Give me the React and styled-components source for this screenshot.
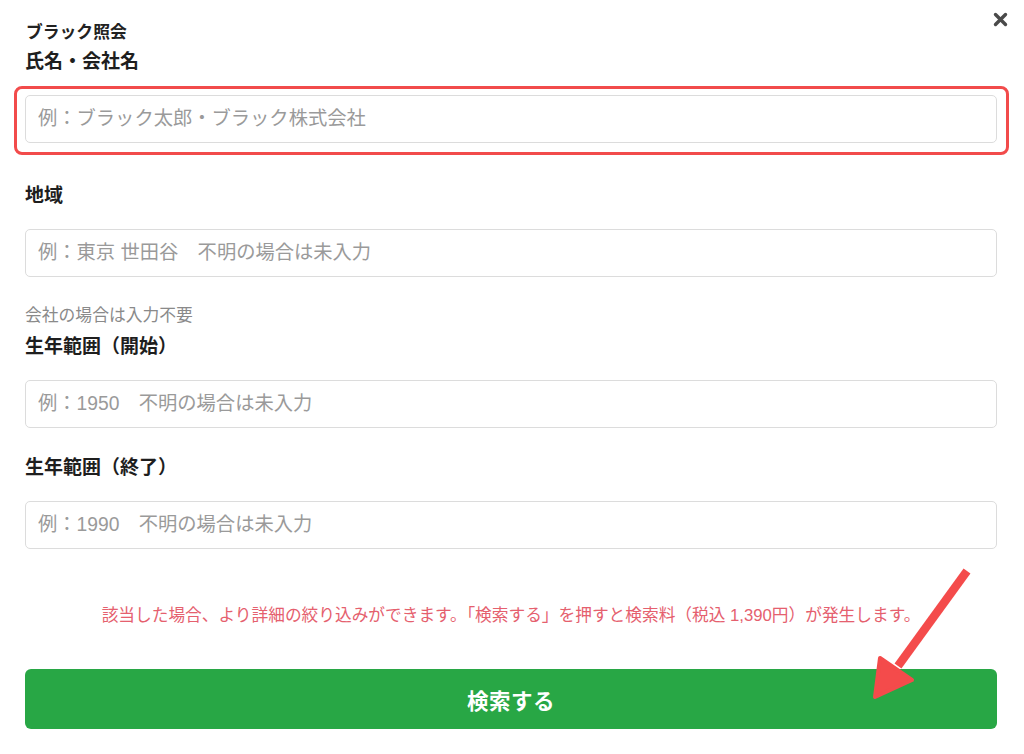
import React from "react";
import styled, { createGlobalStyle } from "styled-components";

const GlobalStyle = createGlobalStyle`
  html, body { margin: 0; padding: 0; background: #fff; }
  body {
    font-family: "Liberation Sans", "Noto Sans CJK JP", sans-serif;
    color: #222;
  }
  * { box-sizing: border-box; }
`;

const Page = styled.div`
  position: relative;
  width: 1024px;
  height: 754px;
  padding: 22px 27px 0 25px;
  overflow: hidden;
`;

const Title = styled.h2`
  margin: 0 0 0 1px;
  font-size: 16.8px;
  line-height: 22px;
  font-weight: 700;
  color: #222;
`;

const Field = styled.div`
  position: relative;
  display: flex;
  flex-direction: column;
  margin-top: ${(p) => p.$top}px;
`;

const Label = styled.label`
  display: block;
  margin-left: 0;
  font-size: 19px;
  line-height: 26px;
  font-weight: 700;
  color: #1e1e1e;
  margin-bottom: 20px;
`;

const Help = styled.div`
  font-size: 16.8px;
  line-height: 22px;
  color: #8a8a8a;
  margin-bottom: 7px;
`;

const Input = styled.input`
  display: block;
  width: 100%;
  height: 48px;
  padding: 0 12px;
  border: 1px solid #dcdcdc;
  border-radius: 5px;
  background: #fff;
  font-family: "Liberation Sans", "Noto Sans CJK JP", sans-serif;
  font-size: 19.3px;
  color: #333;
  outline: none;
  &::placeholder { color: #9a9a9a; }
`;

const Highlight = styled.div`
  position: absolute;
  left: -11px;
  right: -12px;
  bottom: -12px;
  height: 69px;
  border: 3.5px solid #f24b4b;
  border-radius: 8px;
  pointer-events: none;
`;

const Notice = styled.p`
  margin: 56px 0 0;
  text-align: center;
  font-size: 16.7px;
  line-height: 22px;
  color: #e5606e;
`;

const SubmitButton = styled.button`
  display: block;
  width: 100%;
  height: 60px;
  margin-top: 42px;
  border: none;
  border-radius: 6px;
  background: #28a745;
  color: #fff;
  font-family: "Liberation Sans", "Noto Sans CJK JP", sans-serif;
  font-size: 21.5px;
  font-weight: 700;
  letter-spacing: 0.5px;
  cursor: pointer;
`;

const CloseButton = styled.button`
  position: absolute;
  top: 11px;
  right: 15px;
  width: 17px;
  height: 17px;
  padding: 0;
  border: none;
  background: transparent;
  cursor: pointer;
  display: flex;
  align-items: center;
  justify-content: center;
`;

const ArrowLayer = styled.svg`
  position: absolute;
  left: 860px;
  top: 560px;
  pointer-events: none;
`;

export default function App() {
  return (
    <>
      <GlobalStyle />
      <Page>
        <CloseButton aria-label="close">
          <svg width="15" height="15" viewBox="0 0 15 15">
            <path d="M2.5 2.5 L12.5 12.5 M12.5 2.5 L2.5 12.5" stroke="#4a4a4a" strokeWidth="3.4" strokeLinecap="round" />
          </svg>
        </CloseButton>

        <Title>ブラック照会</Title>

        <Field $top={5}>
          <Label>氏名・会社名</Label>
          <Input placeholder="例：ブラック太郎・ブラック株式会社" />
          <Highlight />
        </Field>

        <Field $top={40}>
          <Label>地域</Label>
          <Input placeholder="例：東京 世田谷　不明の場合は未入力" />
        </Field>

        <Field $top={28}>
          <Help>会社の場合は入力不要</Help>
          <Label>生年範囲（開始）</Label>
          <Input placeholder="例：1950　不明の場合は未入力" />
        </Field>

        <Field $top={27}>
          <Label>生年範囲（終了）</Label>
          <Input placeholder="例：1990　不明の場合は未入力" />
        </Field>

        <Notice>
          該当した場合、より詳細の絞り込みができます。「検索する」を押すと検索料（税込 1,390円）が発生します。
        </Notice>

        <SubmitButton>検索する</SubmitButton>

        <ArrowLayer width="130" height="150" viewBox="0 0 130 150">
          <line x1="107" y1="11" x2="38" y2="106" stroke="#f44b4b" strokeWidth="8.5" strokeLinecap="butt" />
          <polygon
            points="20,98 52,120 15,137"
            fill="#f44b4b"
            stroke="#f44b4b"
            strokeWidth="4"
            strokeLinejoin="round"
          />
        </ArrowLayer>
      </Page>
    </>
  );
}
